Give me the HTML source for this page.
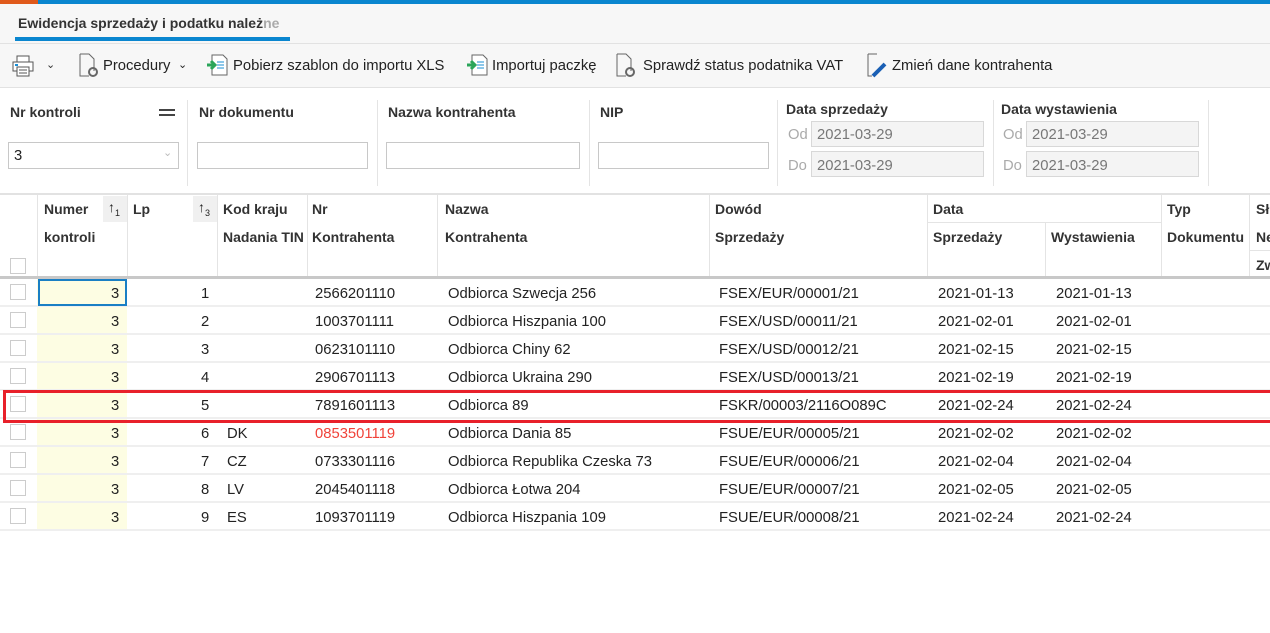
<!DOCTYPE html>
<html><head><meta charset="utf-8"><style>
*{margin:0;padding:0;box-sizing:border-box}
body{width:1270px;height:633px;overflow:hidden;background:#fff;font-family:"Liberation Sans",sans-serif;font-size:14.8px;color:#222;position:relative}
.a{position:absolute;white-space:nowrap}
.t{letter-spacing:0}
.box{position:absolute;border:1px solid #c8c8c8;background:#fff}
.dis{background:#f4f4f4;border-color:#d8d8d8;color:#888}
.vl{position:absolute;width:1px;background:#e4e4e4}
.row{position:absolute;left:0;width:1270px;height:28px;border-bottom:2px solid #efefef}
.row .a{top:7px}
.row .cb{top:5px}
.cb{position:absolute;left:10px;width:16px;height:16px;border:1px solid #ccc;background:#fff}
.yel{position:absolute;left:37px;width:90px;height:26px;background:#fdfde3;top:0!important}
.hd{font-weight:bold;color:#333;font-size:14px}
</style></head><body>
<div class="a" style="left:0;top:0;width:1270px;height:4px;background:#0a86cf"></div>
<div class="a" style="left:0;top:0;width:38px;height:4px;background:#e05a1c"></div>
<div class="a" style="left:0;top:4px;width:1270px;height:40px;background:#f7f7f7;border-bottom:1px solid #e2e2e2"></div>
<div class="a hd t" style="left:18px;top:15px;font-size:14px">Ewidencja sprzedaży i podatku należ<span style="color:#aaa">ne</span></div>
<div class="a" style="left:15px;top:37px;width:275px;height:4px;background:#0a86cf"></div>
<div class="a" style="left:0;top:44px;width:1270px;height:44px;background:#f7f7f7;border-bottom:1px solid #e2e2e2"></div>
<svg class="a" style="left:11px;top:54px" width="26" height="24" viewBox="0 0 26 24"><rect x="6" y="2" width="12" height="6" fill="#fff" stroke="#555"/><rect x="2" y="8" width="20" height="9" fill="#fff" stroke="#555"/><rect x="6" y="13" width="12" height="9" fill="#fff" stroke="#555"/><line x1="4" y1="11" x2="7" y2="11" stroke="#1a8fd6" stroke-width="2"/><line x1="8" y1="16" x2="16" y2="16" stroke="#555"/><line x1="8" y1="19" x2="16" y2="19" stroke="#555"/></svg>
<div class="a" style="left:46px;top:58px;font-size:11px;color:#333">&#8964;</div>
<svg class="a" style="left:78px;top:53px" width="22" height="26" viewBox="0 0 22 26"><path d="M2 1h9l5 5v12M2 1v22h9" fill="none" stroke="#666"/><circle cx="15" cy="19" r="4" fill="none" stroke="#666" stroke-width="2"/></svg>
<div class="a t" style="left:103px;top:58px">Procedury</div>
<div class="a" style="left:178px;top:58px;font-size:11px">&#8964;</div>
<svg class="a" style="left:206px;top:53px" width="24" height="24" viewBox="0 0 24 24"><path d="M6 2h11l4 4v16H6z" fill="#fff" stroke="#666"/><path d="M11 9h7M11 12h7M11 15h7" stroke="#1a8fd6"/><path d="M1 12h7M5 8l4 4-4 4" stroke="#2aa55a" stroke-width="3" fill="none"/></svg>
<div class="a t" style="left:233px;top:58px">Pobierz szablon do importu XLS</div>
<svg class="a" style="left:466px;top:53px" width="24" height="24" viewBox="0 0 24 24"><path d="M6 2h11l4 4v16H6z" fill="#fff" stroke="#666"/><path d="M11 9h7M11 12h7M11 15h7" stroke="#1a8fd6"/><path d="M1 12h7M5 8l4 4-4 4" stroke="#2aa55a" stroke-width="3" fill="none"/></svg>
<div class="a t" style="left:492px;top:58px">Importuj paczkę</div>
<svg class="a" style="left:615px;top:53px" width="22" height="26" viewBox="0 0 22 26"><path d="M2 1h9l5 5v12M2 1v22h9" fill="none" stroke="#666"/><circle cx="15" cy="19" r="4" fill="none" stroke="#666" stroke-width="2"/></svg>
<div class="a t" style="left:643px;top:58px">Sprawdź status podatnika VAT</div>
<svg class="a" style="left:866px;top:53px" width="24" height="26" viewBox="0 0 24 26"><path d="M2 1h9M2 1v22h4" fill="none" stroke="#666"/><path d="M7 23l12-12" stroke="#1a5fb4" stroke-width="4"/></svg>
<div class="a t" style="left:892px;top:58px">Zmień dane kontrahenta</div>
<div class="a hd t" style="left:10px;top:104px">Nr kontroli</div>
<div class="a" style="left:159px;top:109px;width:16px;height:2px;background:#444"></div><div class="a" style="left:159px;top:114px;width:16px;height:2px;background:#444"></div>
<div class="box" style="left:8px;top:142px;width:171px;height:27px"></div><div class="a" style="left:14px;top:148px">3</div><div class="a" style="left:163px;top:146px;font-size:11px;color:#bbb">&#8964;</div>
<div class="vl" style="left:187px;top:100px;height:86px"></div>
<div class="a hd t" style="left:199px;top:104px">Nr dokumentu</div>
<div class="box" style="left:197px;top:142px;width:171px;height:27px"></div>
<div class="vl" style="left:377px;top:100px;height:86px"></div>
<div class="a hd t" style="left:388px;top:104px">Nazwa kontrahenta</div>
<div class="box" style="left:386px;top:142px;width:194px;height:27px"></div>
<div class="vl" style="left:589px;top:100px;height:86px"></div>
<div class="a hd t" style="left:600px;top:104px">NIP</div>
<div class="box" style="left:598px;top:142px;width:171px;height:27px"></div>
<div class="vl" style="left:777px;top:100px;height:86px"></div>
<div class="a hd t" style="left:786px;top:101px">Data sprzedaży</div>
<div class="a" style="left:788px;top:127px;color:#aaa">Od</div><div class="box dis" style="left:811px;top:121px;width:173px;height:26px"></div><div class="a" style="left:817px;top:127px;color:#777">2021-03-29</div>
<div class="a" style="left:788px;top:158px;color:#aaa">Do</div><div class="box dis" style="left:811px;top:151px;width:173px;height:26px"></div><div class="a" style="left:817px;top:158px;color:#777">2021-03-29</div>
<div class="vl" style="left:993px;top:100px;height:86px"></div>
<div class="a hd t" style="left:1001px;top:101px">Data wystawienia</div>
<div class="a" style="left:1003px;top:127px;color:#aaa">Od</div><div class="box dis" style="left:1026px;top:121px;width:173px;height:26px"></div><div class="a" style="left:1032px;top:127px;color:#777">2021-03-29</div>
<div class="a" style="left:1003px;top:158px;color:#aaa">Do</div><div class="box dis" style="left:1026px;top:151px;width:173px;height:26px"></div><div class="a" style="left:1032px;top:158px;color:#777">2021-03-29</div>
<div class="vl" style="left:1208px;top:100px;height:86px"></div>
<div class="a" style="left:0;top:193px;width:1270px;height:2px;background:#e2e2e2"></div>
<div class="a" style="left:0;top:276px;width:1270px;height:3px;background:#c8c8c8"></div>
<div class="vl" style="left:37px;top:195px;height:81px"></div>
<div class="vl" style="left:127px;top:195px;height:81px"></div>
<div class="vl" style="left:217px;top:195px;height:81px"></div>
<div class="vl" style="left:307px;top:195px;height:81px"></div>
<div class="vl" style="left:437px;top:195px;height:81px"></div>
<div class="vl" style="left:709px;top:195px;height:81px"></div>
<div class="vl" style="left:927px;top:195px;height:81px"></div>
<div class="vl" style="left:1045px;top:222px;height:54px"></div>
<div class="vl" style="left:1161px;top:195px;height:81px"></div>
<div class="vl" style="left:1249px;top:195px;height:81px"></div>
<div class="a" style="left:927px;top:222px;width:234px;height:1px;background:#e4e4e4"></div>
<div class="a" style="left:1249px;top:250px;width:21px;height:1px;background:#e4e4e4"></div>
<div class="a" style="left:103px;top:196px;width:24px;height:26px;background:#f0f0f0"></div>
<div class="a" style="left:193px;top:196px;width:24px;height:26px;background:#f0f0f0"></div>
<div class="a" style="left:108px;top:199px;font-size:14px">&#8593;<sub style="font-size:9px">1</sub></div>
<div class="a" style="left:198px;top:199px;font-size:14px">&#8593;<sub style="font-size:9px">3</sub></div>
<div class="cb" style="top:258px"></div>
<div class="a hd t" style="left:44px;top:201px">Numer</div><div class="a hd t" style="left:44px;top:229px">kontroli</div>
<div class="a hd t" style="left:133px;top:201px">Lp</div>
<div class="a hd t" style="left:223px;top:201px">Kod kraju</div><div class="a hd t" style="left:223px;top:229px;width:84px;overflow:hidden">Nadania TIN</div>
<div class="a hd t" style="left:312px;top:201px">Nr</div><div class="a hd t" style="left:312px;top:229px">Kontrahenta</div>
<div class="a hd t" style="left:445px;top:201px">Nazwa</div><div class="a hd t" style="left:445px;top:229px">Kontrahenta</div>
<div class="a hd t" style="left:715px;top:201px">Dowód</div><div class="a hd t" style="left:715px;top:229px">Sprzedaży</div>
<div class="a hd t" style="left:933px;top:201px">Data</div><div class="a hd t" style="left:933px;top:229px">Sprzedaży</div><div class="a hd t" style="left:1051px;top:229px">Wystawienia</div>
<div class="a hd t" style="left:1167px;top:201px">Typ</div><div class="a hd t" style="left:1167px;top:229px">Dokumentu</div>
<div class="a hd t" style="left:1256px;top:201px">Sł</div><div class="a hd t" style="left:1256px;top:229px">Ne</div><div class="a hd t" style="left:1256px;top:257px">Zw</div>
<div class="row" style="top:279px"><div class="cb"></div><div class="yel"></div><div class="a" style="left:38px;top:0!important;width:89px;height:27px;border:2px solid #1a7fc4"></div><div class="a" style="left:111px">3</div><div class="a" style="left:201px">1</div><div class="a t" style="left:315px">2566201110</div><div class="a t" style="left:448px">Odbiorca Szwecja 256</div><div class="a t" style="left:719px">FSEX/EUR/00001/21</div><div class="a t" style="left:938px">2021-01-13</div><div class="a t" style="left:1056px">2021-01-13</div></div>
<div class="row" style="top:307px"><div class="cb"></div><div class="yel"></div><div class="a" style="left:111px">3</div><div class="a" style="left:201px">2</div><div class="a t" style="left:315px">1003701111</div><div class="a t" style="left:448px">Odbiorca Hiszpania 100</div><div class="a t" style="left:719px">FSEX/USD/00011/21</div><div class="a t" style="left:938px">2021-02-01</div><div class="a t" style="left:1056px">2021-02-01</div></div>
<div class="row" style="top:335px"><div class="cb"></div><div class="yel"></div><div class="a" style="left:111px">3</div><div class="a" style="left:201px">3</div><div class="a t" style="left:315px">0623101110</div><div class="a t" style="left:448px">Odbiorca Chiny 62</div><div class="a t" style="left:719px">FSEX/USD/00012/21</div><div class="a t" style="left:938px">2021-02-15</div><div class="a t" style="left:1056px">2021-02-15</div></div>
<div class="row" style="top:363px"><div class="cb"></div><div class="yel"></div><div class="a" style="left:111px">3</div><div class="a" style="left:201px">4</div><div class="a t" style="left:315px">2906701113</div><div class="a t" style="left:448px">Odbiorca Ukraina 290</div><div class="a t" style="left:719px">FSEX/USD/00013/21</div><div class="a t" style="left:938px">2021-02-19</div><div class="a t" style="left:1056px">2021-02-19</div></div>
<div class="row" style="top:391px"><div class="cb"></div><div class="yel"></div><div class="a" style="left:111px">3</div><div class="a" style="left:201px">5</div><div class="a t" style="left:315px">7891601113</div><div class="a t" style="left:448px">Odbiorca 89</div><div class="a t" style="left:719px">FSKR/00003/2116O089C</div><div class="a t" style="left:938px">2021-02-24</div><div class="a t" style="left:1056px">2021-02-24</div></div>
<div class="row" style="top:419px"><div class="cb"></div><div class="yel"></div><div class="a" style="left:111px">3</div><div class="a" style="left:201px">6</div><div class="a" style="left:227px">DK</div><div class="a t" style="left:315px;color:#f0433a">0853501119</div><div class="a t" style="left:448px">Odbiorca Dania 85</div><div class="a t" style="left:719px">FSUE/EUR/00005/21</div><div class="a t" style="left:938px">2021-02-02</div><div class="a t" style="left:1056px">2021-02-02</div></div>
<div class="row" style="top:447px"><div class="cb"></div><div class="yel"></div><div class="a" style="left:111px">3</div><div class="a" style="left:201px">7</div><div class="a" style="left:227px">CZ</div><div class="a t" style="left:315px">0733301116</div><div class="a t" style="left:448px">Odbiorca Republika Czeska 73</div><div class="a t" style="left:719px">FSUE/EUR/00006/21</div><div class="a t" style="left:938px">2021-02-04</div><div class="a t" style="left:1056px">2021-02-04</div></div>
<div class="row" style="top:475px"><div class="cb"></div><div class="yel"></div><div class="a" style="left:111px">3</div><div class="a" style="left:201px">8</div><div class="a" style="left:227px">LV</div><div class="a t" style="left:315px">2045401118</div><div class="a t" style="left:448px">Odbiorca Łotwa 204</div><div class="a t" style="left:719px">FSUE/EUR/00007/21</div><div class="a t" style="left:938px">2021-02-05</div><div class="a t" style="left:1056px">2021-02-05</div></div>
<div class="row" style="top:503px"><div class="cb"></div><div class="yel"></div><div class="a" style="left:111px">3</div><div class="a" style="left:201px">9</div><div class="a" style="left:227px">ES</div><div class="a t" style="left:315px">1093701119</div><div class="a t" style="left:448px">Odbiorca Hiszpania 109</div><div class="a t" style="left:719px">FSUE/EUR/00008/21</div><div class="a t" style="left:938px">2021-02-24</div><div class="a t" style="left:1056px">2021-02-24</div></div>
<div class="a" style="left:3px;top:390px;width:1270px;height:33px;border:3px solid #e8202a"></div>
</body></html>
